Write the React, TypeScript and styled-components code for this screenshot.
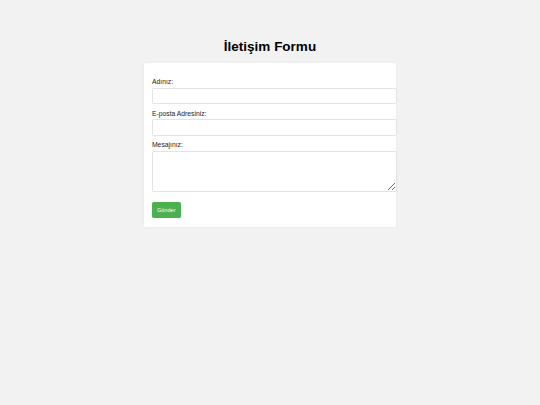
import React from "react";
import styled, { createGlobalStyle } from "styled-components";

const GlobalStyle = createGlobalStyle`
  html, body {
    margin: 0;
    padding: 0;
    background: #f2f2f2;
    font-family: "Liberation Sans", Arial, sans-serif;
  }
`;

const Page = styled.div`
  width: 540px;
  min-height: 405px;
  background: #f2f2f2;
  display: flex;
  flex-direction: column;
  align-items: center;
  padding-top: 39px;
  box-sizing: border-box;
`;

const Title = styled.h1`
  margin: 0 0 8.5px;
  font-size: 13.5px;
  line-height: 15.5px;
  font-weight: bold;
  color: #000;
  text-align: center;
`;

const Card = styled.form`
  width: 252px;
  box-sizing: border-box;
  background: #fff;
  border-radius: 2px;
  padding: 15.1px 8px 9px;
  box-shadow: 0 0 4px rgba(0, 0, 0, 0.04);
`;

const Label = styled.label`
  display: block;
  font-size: 6.75px;
  line-height: 7.8px;
  color: #222;
  margin-bottom: 1.8px;
`;

const fieldStyle = `
  display: block;
  width: 245px;
  box-sizing: border-box;
  border: 1px solid #e2e2e2;
  border-radius: 1.7px;
  background: #fff;
  margin: 0 0 5.8px;
  padding: 0 4px;
  font-family: "Liberation Sans", Arial, sans-serif;
  font-size: 5.6px;
  outline: none;
`;

const Input = styled.input`
  ${fieldStyle}
  height: 16.3px;
`;

const TextArea = styled.textarea`
  ${fieldStyle}
  height: 40.6px;
  margin-bottom: 10.3px;
  resize: vertical;
`;

const Button = styled.button`
  display: block;
  width: 28.5px;
  height: 16px;
  padding: 0;
  border: none;
  border-radius: 1.7px;
  background: #4caf50;
  color: #fff;
  font-family: "Liberation Sans", Arial, sans-serif;
  font-size: 5.6px;
  cursor: pointer;
`;

export default function App() {
  return (
    <>
      <GlobalStyle />
      <Page>
        <Title>İletişim Formu</Title>
        <Card onSubmit={(e) => e.preventDefault()}>
          <Label htmlFor="name">Adınız:</Label>
          <Input id="name" type="text" />
          <Label htmlFor="email">E-posta Adresiniz:</Label>
          <Input id="email" type="email" />
          <Label htmlFor="message">Mesajınız:</Label>
          <TextArea id="message" />
          <Button type="submit">Gönder</Button>
        </Card>
      </Page>
    </>
  );
}
